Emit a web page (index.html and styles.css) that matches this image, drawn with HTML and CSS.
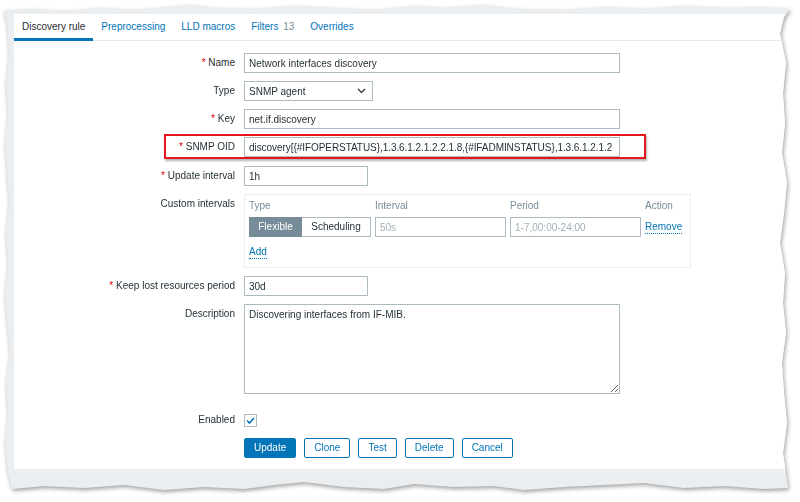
FILE: index.html
```html
<!DOCTYPE html>
<html lang="en">
<head>
<meta charset="utf-8">
<title>Discovery rule</title>
<link rel="stylesheet" href="styles.css">
</head>
<body>
<div class="sheet">
  <div class="paper">
    <div class="panel">
      <ul class="tabs">
        <li class="tab active">Discovery rule</li>
        <li class="tab">Preprocessing</li>
        <li class="tab">LLD macros</li>
        <li class="tab">Filters <span class="count">13</span></li>
        <li class="tab">Overrides</li>
      </ul>

      <div class="form">
        <div class="row">
          <label class="lbl"><span class="req">*</span> Name</label>
          <div class="ctl"><input class="inp w-wide" type="text" value="Network interfaces discovery"></div>
        </div>

        <div class="row">
          <label class="lbl">Type</label>
          <div class="ctl">
            <div class="select">
              <span>SNMP agent</span>
              <svg class="chev" width="9" height="6" viewBox="0 0 9 6"><polyline points="1,1 4.5,4.5 8,1" fill="none" stroke="#1f2c33" stroke-width="1.2"/></svg>
            </div>
          </div>
        </div>

        <div class="row">
          <label class="lbl"><span class="req">*</span> Key</label>
          <div class="ctl"><input class="inp w-wide" type="text" value="net.if.discovery"></div>
        </div>

        <div class="row row-snmp">
          <label class="lbl"><span class="req">*</span> SNMP OID</label>
          <div class="ctl"><input class="inp w-wide oid" type="text" value="discovery[{#IFOPERSTATUS},1.3.6.1.2.1.2.2.1.8,{#IFADMINSTATUS},1.3.6.1.2.1.2"></div>
          <div class="highlight"></div>
        </div>

        <div class="row">
          <label class="lbl"><span class="req">*</span> Update interval</label>
          <div class="ctl"><input class="inp w-small" type="text" value="1h"></div>
        </div>

        <div class="row">
          <label class="lbl">Custom intervals</label>
          <div class="ctl">
            <div class="intervals">
              <div class="int-grid int-head">
                <span>Type</span>
                <span>Interval</span>
                <span>Period</span>
                <span>Action</span>
              </div>
              <div class="int-grid int-row">
                <div class="seg">
                  <span class="seg-btn on">Flexible</span>
                  <span class="seg-btn">Scheduling</span>
                </div>
                <input class="inp" type="text" placeholder="50s">
                <input class="inp" type="text" placeholder="1-7,00:00-24:00">
                <span class="link">Remove</span>
              </div>
              <div class="add-line"><span class="link">Add</span></div>
            </div>
          </div>
        </div>

        <div class="row">
          <label class="lbl"><span class="req">*</span> Keep lost resources period</label>
          <div class="ctl"><input class="inp w-small" type="text" value="30d"></div>
        </div>

        <div class="row">
          <label class="lbl">Description</label>
          <div class="ctl"><textarea class="area w-wide">Discovering interfaces from IF-MIB.</textarea></div>
        </div>

        <div class="row row-enabled">
          <label class="lbl">Enabled</label>
          <div class="ctl">
            <span class="check">
              <svg width="11" height="11" viewBox="0 0 11 11"><polyline points="2,5.5 4.5,8 9,3" fill="none" stroke="#0275b8" stroke-width="1.6"/></svg>
            </span>
          </div>
        </div>

        <div class="row row-buttons">
          <span class="lbl"></span>
          <div class="ctl buttons">
            <button class="btn primary">Update</button>
            <button class="btn">Clone</button>
            <button class="btn">Test</button>
            <button class="btn">Delete</button>
            <button class="btn">Cancel</button>
          </div>
        </div>
      </div>
    </div>
  </div>
</div>
</body>
</html>
```

FILE: styles.css
```css
* {
  box-sizing: border-box;
}

html,
body {
  margin: 0;
  padding: 0;
  background: #ffffff;
}

body {
  font-family: "Liberation Sans", Arial, sans-serif;
  font-size: 10px;
  color: #1f2c33;
}

.sheet {
  padding: 3px 6px 8px 4px;
  filter: drop-shadow(1px 2px 2px rgba(0, 0, 0, 0.38));
}

.paper {
  width: 790px;
  height: 491px;
  background: #ebeef0;
  padding: 11px 0 0 10px;
  clip-path: polygon(
    0px 7px, 30px 6px, 60px 8px, 95px 5px, 130px 7px, 165px 4px, 185px 2px, 210px 5px,
    250px 6px, 290px 3px, 330px 5px, 370px 7px, 410px 3px, 440px 5px, 480px 2px, 510px 6px,
    560px 7px, 600px 4px, 640px 6px, 680px 3px, 720px 5px, 760px 4px, 786px 6px,
    780px 14px, 776px 30px, 782px 60px, 779px 90px, 781px 120px, 778px 150px, 783px 180px,
    780px 210px, 776px 240px, 781px 270px, 779px 300px, 782px 330px, 778px 360px,
    780px 390px, 783px 420px, 779px 450px, 782px 470px, 784px 485px,
    760px 486px, 720px 483px, 680px 485px, 640px 480px, 600px 482px, 560px 484px,
    520px 487px, 490px 483px, 450px 484px, 410px 481px, 380px 486px, 340px 484px,
    300px 479px, 270px 482px, 240px 486px, 200px 484px, 160px 487px, 120px 482px,
    80px 485px, 40px 483px, 8px 486px,
    4px 470px, 1px 440px, 4px 410px, 2px 380px, 6px 350px, 3px 320px, 1px 290px,
    4px 260px, 2px 230px, 5px 200px, 3px 170px, 1px 140px, 4px 110px, 2px 80px,
    5px 50px, 3px 20px
  );
}

.panel {
  background: #ffffff;
  height: 455px;
}

/* Tabs */
.tabs {
  display: flex;
  list-style: none;
  margin: 0;
  padding: 0;
  height: 27px;
  border-bottom: 1px solid #e6eaed;
}

.tab {
  height: 26px;
  line-height: 26px;
  padding: 0 8px;
  color: #0275b8;
  white-space: nowrap;
}

.tab.active {
  color: #1f2c33;
  height: 27px;
  border-bottom: 3px solid #0275b8;
}

.count {
  color: #768d99;
  margin-left: 2px;
}

/* Form */
.form {
  display: flex;
  flex-direction: column;
  gap: 8px;
  padding-top: 12px;
}

.row {
  display: flex;
  align-items: flex-start;
}

.lbl {
  width: 221px;
  flex: none;
  text-align: right;
  line-height: 20px;
  white-space: nowrap;
}

.req {
  color: #d40000;
}

.ctl {
  margin-left: 9px;
}

.inp {
  display: block;
  height: 20px;
  margin: 0;
  border: 1px solid #acbbc2;
  padding: 0 4px;
  font: inherit;
  color: #1f2c33;
  background: #ffffff;
  outline: none;
}

.inp.oid {
  letter-spacing: -0.06px;
}

.inp::placeholder {
  color: #a2b0b7;
}

.w-wide {
  width: 376px;
}

.w-small {
  width: 124px;
}

.select {
  width: 129px;
  height: 20px;
  border: 1px solid #acbbc2;
  padding: 0 6px 0 4px;
  display: flex;
  align-items: center;
  justify-content: space-between;
}

/* SNMP OID highlight */
.row-snmp {
  position: relative;
  margin-bottom: 1px;
}

.highlight {
  position: absolute;
  left: 150px;
  top: -3px;
  width: 482px;
  height: 25px;
  border: 2px solid #e8161c;
  box-shadow: 1px 2px 2px rgba(0, 0, 0, 0.3);
  pointer-events: none;
}

/* Custom intervals */
.intervals {
  width: 447px;
  border: 1px solid #ebeef0;
  padding: 4px 5px 8px 4px;
}

.int-grid {
  display: grid;
  grid-template-columns: 122px 131px 131px auto;
  column-gap: 4px;
}

.int-head {
  line-height: 14px;
  color: #768d99;
}

.int-row {
  margin-top: 4px;
  align-items: start;
}

.int-row .inp {
  width: 100%;
}

.seg {
  display: flex;
  height: 20px;
}

.seg-btn {
  height: 20px;
  line-height: 18px;
  border: 1px solid #acbbc2;
  text-align: center;
  background: #ffffff;
  color: #1f2c33;
}

.seg-btn.on {
  width: 53px;
  background: #768d99;
  border-color: #768d99;
  color: #ffffff;
}

.seg-btn:not(.on) {
  width: 69px;
  border-left: none;
}

.link {
  color: #0275b8;
  border-bottom: 1px dotted #0275b8;
  line-height: 12px;
  justify-self: start;
  align-self: center;
}

.add-line {
  margin-top: 8px;
  line-height: 14px;
}

.add-line .link {
  display: inline-block;
}

/* Description */
.area {
  display: block;
  height: 90px;
  margin: 0;
  border: 1px solid #acbbc2;
  padding: 3px 4px;
  font: inherit;
  line-height: 14px;
  color: #1f2c33;
  resize: vertical;
  outline: none;
}

.row-enabled {
  margin-top: 8px;
}

.check {
  display: block;
  width: 13px;
  height: 13px;
  margin-top: 4px;
  border: 1px solid #acbbc2;
  background: #ffffff;
  position: relative;
}

.check svg {
  display: block;
  position: absolute;
  left: 0;
  top: 0;
}

.row-buttons {
  margin-top: 0;
}

.buttons {
  display: flex;
  gap: 8px;
}

.btn {
  height: 20px;
  margin: 0;
  padding: 0 9px;
  border: 1px solid #0275b8;
  border-radius: 2px;
  background: #ffffff;
  color: #0275b8;
  font: inherit;
  line-height: 18px;
}

.btn.primary {
  background: #0275b8;
  color: #ffffff;
}
```
